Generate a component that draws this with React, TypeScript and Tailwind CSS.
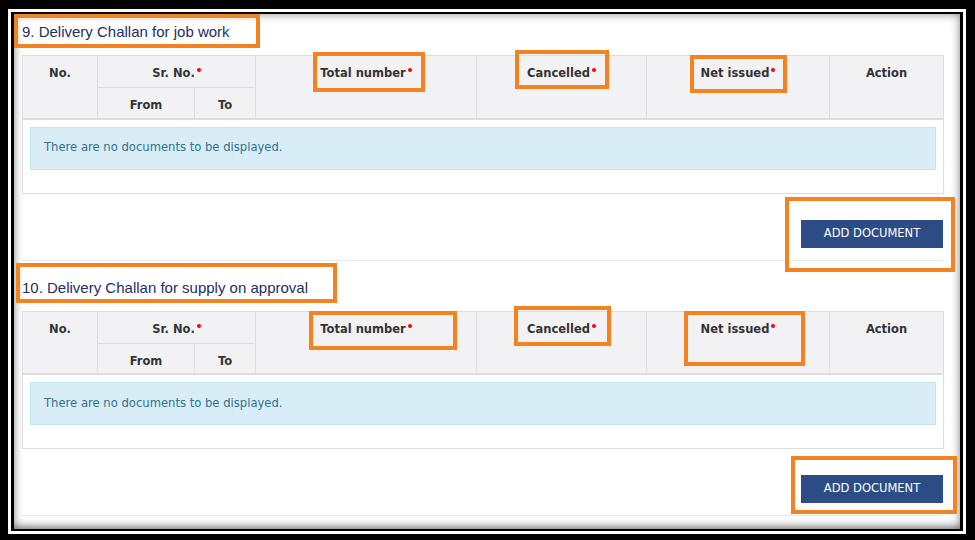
import React from 'react';

const Dot: React.FC = () => (
  <span className="inline-block w-[4px] h-[4px] rounded-full bg-[#ff0000] align-top mt-[3px] ml-[2px]" />
);

const Section: React.FC<{ title: string; first?: boolean }> = ({ title, first }) => {
  const th = 'border border-[#dddddd] text-center font-bold text-[11.5px] text-[#333333] align-top pt-[9px] leading-[16px]';
  return (
    <div className={first ? '' : 'mt-[17px]'}>
      <div className="h-[20px] leading-[20px] text-[15px] text-[#1f2d63] font-['Liberation_Sans',Arial,sans-serif]">
        {title}
      </div>
      <table className="mt-[13px] w-[921px] table-fixed border-collapse border border-[#dddddd] font-['DejaVu_Sans',Verdana,sans-serif]">
        <colgroup>
          <col className="w-[75px]" />
          <col className="w-[97px]" />
          <col className="w-[61px]" />
          <col className="w-[221px]" />
          <col className="w-[170px]" />
          <col className="w-[183px]" />
          <col className="w-[114px]" />
        </colgroup>
        <thead className="bg-[#f2f2f4]">
          <tr className="h-[32px]">
            <th rowSpan={2} className={th}>No.</th>
            <th colSpan={2} className={th}>Sr. No.<Dot /></th>
            <th rowSpan={2} className={th}>Total number<Dot /></th>
            <th rowSpan={2} className={th}>Cancelled<Dot /></th>
            <th rowSpan={2} className={th}>Net issued<Dot /></th>
            <th rowSpan={2} className={th}>Action</th>
          </tr>
          <tr className="h-[31px] border-b-2 border-[#dddddd]">
            <th className={th}>From</th>
            <th className={th}>To</th>
          </tr>
        </thead>
        <tbody>
          <tr>
            <td colSpan={7} className="pt-[7px] pb-[23px] px-[7px]">
              <div className="h-[43px] flex items-center px-[13px] bg-[#d9edf7] border border-[#bce8f1] text-[#31708f] text-[11.6px]">
                There are no documents to be displayed.
              </div>
            </td>
          </tr>
        </tbody>
      </table>
      <div className="flex justify-end mt-[26px] pb-[12px] border-b border-[#e8e8e8]">
        <button className="w-[142px] h-[28px] bg-[#2c4c85] text-white text-[11.5px] font-['DejaVu_Sans',Verdana,sans-serif]">
          ADD DOCUMENT
        </button>
      </div>
    </div>
  );
};

const boxes = [
  'left-[14px] top-[14px] w-[246px] h-[34px]',
  'left-[313px] top-[52px] w-[112px] h-[40px]',
  'left-[515px] top-[50px] w-[94px] h-[39px]',
  'left-[690px] top-[55px] w-[97px] h-[38px]',
  'left-[785px] top-[197px] w-[170px] h-[75px]',
  'left-[16px] top-[263px] w-[321px] h-[40px]',
  'left-[309px] top-[311px] w-[148px] h-[39px]',
  'left-[514px] top-[306px] w-[97px] h-[40px]',
  'left-[684px] top-[311px] w-[121px] h-[55px]',
  'left-[791px] top-[456px] w-[166px] h-[58px]',
];

export default function App() {
  return (
    <div className="relative w-[975px] h-[540px] bg-black pl-[8px] pt-[9px] pr-[9px] pb-[6px]">
      <div className="w-full h-full border-[3px] border-white">
        <div className="w-full h-full border-x-[3px] border-y-[2px] border-black">
          <div className="w-full h-full overflow-hidden bg-white pl-[8px] pr-[17px] pt-[8px] shadow-[inset_0_0_10px_rgba(0,0,0,0.45),inset_0_-8px_10px_-6px_rgba(0,0,0,0.35)]">
            <Section first title="9. Delivery Challan for job work" />
            <Section title="10. Delivery Challan for supply on approval" />
          </div>
        </div>
      </div>
      {boxes.map((b, i) => (
        <div key={i} className={`absolute border-[4px] border-[#f58220] ${b}`} />
      ))}
    </div>
  );
}
